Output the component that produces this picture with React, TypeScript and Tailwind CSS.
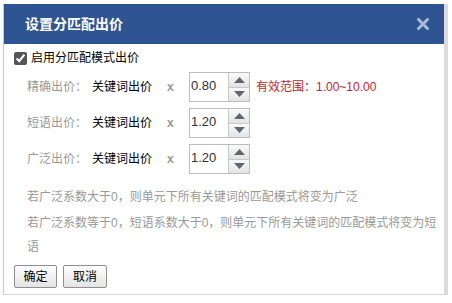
import { useState } from 'react'

const font = { fontFamily: '"Liberation Sans", "Noto Sans CJK SC", sans-serif' }

function Spinner({ value }: { value: string }) {
  return (
    <div className="flex h-[30px] w-[61px] shrink-0 border border-[#bdbdbd] bg-white">
      <div className="flex-1 pl-[1px] text-[13px] leading-[26px] text-[#333]">{value}</div>
      <div className="flex w-[21px] flex-col border-l border-[#c8c8c8]">
        <div className="flex flex-1 items-center justify-center border-b border-[#c8c8c8] bg-gradient-to-b from-[#fafafa] to-[#e4e4e4]">
          <svg width="11" height="6" viewBox="0 0 11 6"><path d="M0 6 L5.5 0 L11 6 Z" fill="#5f6870" /></svg>
        </div>
        <div className="flex flex-1 items-center justify-center bg-gradient-to-b from-[#fafafa] to-[#e4e4e4]">
          <svg width="11" height="6" viewBox="0 0 11 6"><path d="M0 0 L11 0 L5.5 6 Z" fill="#5f6870" /></svg>
        </div>
      </div>
    </div>
  )
}

function BidRow({ label, value, hint }: { label: string; value: string; hint?: string }) {
  return (
    <div className="flex h-[30px] items-center whitespace-nowrap text-[12px]">
      <span className="w-[65px] shrink-0 text-[#999]">{label}</span>
      <span className="w-[75px] shrink-0 text-black">关键词出价</span>
      <span className="w-[22px] shrink-0 font-bold text-[#999]">x</span>
      <Spinner value={value} />
      {hint && <span className="ml-[6px] text-[#c0272d]">{hint}</span>}
    </div>
  )
}

export default function App() {
  const [enabled, setEnabled] = useState(true)

  return (
    <div className="relative h-[303px] w-[452px] overflow-hidden bg-white" style={font}>
      <div className="ml-[3px] mt-[4px] h-[291px] w-[445px] border-b border-l border-r-[4px] border-b-[#d6d6d6] border-l-[#c8c8c8] border-r-[#dcdcdc] bg-white">
        <div className="flex h-[40px] items-center justify-between bg-[#2e5592] pl-[21px] pr-[15px]">
          <h1 className="text-[14px] font-bold text-white">设置分匹配出价</h1>
          <svg width="12" height="12" viewBox="0 0 12 12">
            <path d="M1.5 1.5 L10.5 10.5 M10.5 1.5 L1.5 10.5" stroke="#a9bbd6" strokeWidth="3" strokeLinecap="round" />
          </svg>
        </div>

        <div className="pl-[10px] pt-[5px]">
          <label className="flex h-[18px] items-center gap-[4px] text-[12px] text-black">
            <input
              type="checkbox"
              checked={enabled}
              onChange={(e) => setEnabled(e.target.checked)}
              className="h-[13px] w-[13px] accent-[#555]"
            />
            启用分匹配模式出价
          </label>

          <div className="mt-[5px] flex flex-col gap-[6px] pl-[13px]">
            <BidRow label="精确出价：" value="0.80" hint="有效范围：1.00~10.00" />
            <BidRow label="短语出价：" value="1.20" />
            <BidRow label="广泛出价：" value="1.20" />
          </div>

          <div className="mt-[11px] flex w-[427px] flex-col gap-[2px] pl-[13px] text-[12px] leading-[24px] text-[#999]">
            <p>若广泛系数大于0，则单元下所有关键词的匹配模式将变为广泛</p>
            <p>若广泛系数等于0，短语系数大于0，则单元下所有关键词的匹配模式将变为短语</p>
          </div>

          <div className="mt-[6px] flex gap-[6px]">
            <button className="h-[23px] w-[43px] rounded-[2px] border border-[#8e8e8e] bg-gradient-to-b from-white to-[#e4e4e4] text-[12px] text-black">确定</button>
            <button className="h-[23px] w-[44px] rounded-[2px] border border-[#8e8e8e] bg-gradient-to-b from-white to-[#e4e4e4] text-[12px] text-black">取消</button>
          </div>
        </div>
      </div>
    </div>
  )
}
